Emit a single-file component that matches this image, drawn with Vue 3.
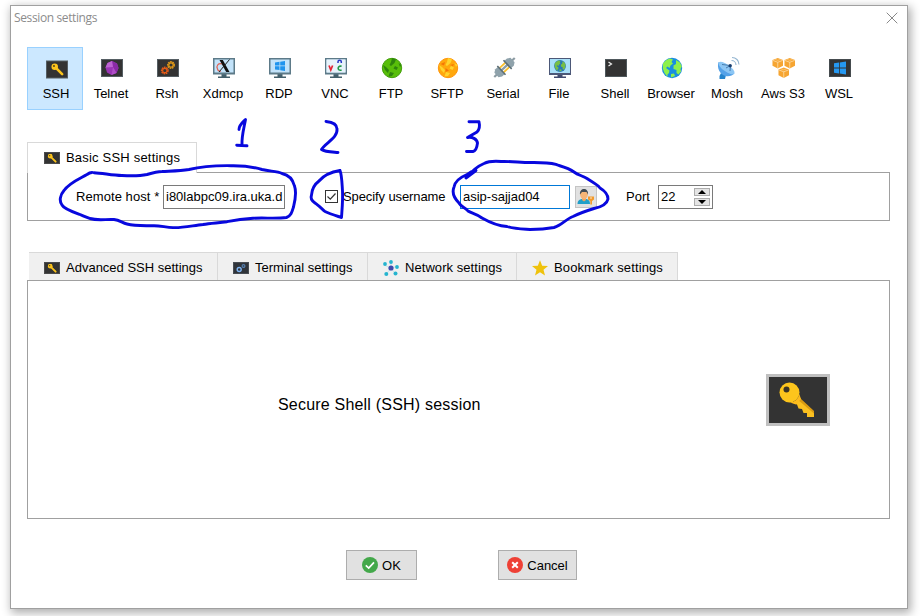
<script setup>
import { ref } from 'vue'

const sessions = ['SSH', 'Telnet', 'Rsh', 'Xdmcp', 'RDP', 'VNC', 'FTP', 'SFTP', 'Serial', 'File', 'Shell', 'Browser', 'Mosh', 'Aws S3', 'WSL']
const active = ref('SSH')
const iconId = (name) => '#i-' + name.toLowerCase().replace(' ', '')

const tabs = [
  { label: 'Advanced SSH settings', icon: '#i-key', cls: 'w-adv' },
  { label: 'Terminal settings', icon: '#i-term', cls: 'w-term' },
  { label: 'Network settings', icon: '#i-net', cls: 'w-net' },
  { label: 'Bookmark settings', icon: '#i-star', cls: 'w-book' },
]
const host = ref('i80labpc09.ira.uka.d')
const user = ref('asip-sajjad04')
const port = ref('22')
</script>

<template>
  <div class="desktop">
    <svg class="defs" width="0" height="0" aria-hidden="true">
      <defs>
        <symbol id="keyshape" viewBox="0 0 40 40">
          <path d="M21 18 L36 31.500 V37 H29 V33 H25.500 L24 29 L20.500 28.500 L19 24.500 L15 23 Z" fill="#fbc020" />
          <path d="M22 18 L36 31 V33.500 L19.500 19.500 Z" fill="#d99a12" />
          <circle cx="11.500" cy="12.500" r="10" fill="#fdc51c" />
          <path d="M12 22.500 A10 10 0 0 0 21.300 14 L23 19 L18 24.500 Z" fill="#fdbb1c" />
          <circle cx="8.500" cy="9.500" r="3" fill="#3a3426" />
        </symbol>
        <symbol id="keysmall" viewBox="0 0 14 14">
          <path d="M4.500 4.500 L12 12" stroke="#fbc41c" stroke-width="2.800" stroke-linecap="round" />
          <circle cx="4" cy="4" r="3.500" fill="#fdc51c" />
          <circle cx="3.200" cy="3.200" r="1" fill="#4a3c1c" />
        </symbol>
        <symbol id="i-ssh" viewBox="0 0 24 24">
          <rect x="1.500" y="4" width="21" height="17" fill="#333" stroke="#555e63" />
          <use href="#keysmall" x="6" y="6" width="13" height="13" />
        </symbol>
        <symbol id="i-key" viewBox="0 0 16 14">
          <rect x=".5" y="1.500" width="15" height="11" fill="#333" stroke="#4b4b4b" />
          <use href="#keysmall" x="3.500" y="2.500" width="9.500" height="9.500" />
        </symbol>
        <symbol id="i-telnet" viewBox="0 0 24 24">
          <rect x="1.500" y="3.500" width="21" height="17" fill="#333" stroke="#555e63" />
          <path d="M12 5 L17 7.500 L18.500 12 L16.500 17 L11.500 19 L7 16.500 L5.500 11.500 L7.500 7 Z" fill="#9a35b5" />
          <path d="M12 5 L13 11 L16.500 17 L18.500 12 L17 7.500 Z" fill="#8a2ba6" />
          <path d="M12 5 L13 11 L5.500 11.500 L7.500 7 Z" fill="#bd63d2" />
          <path d="M13 11 L16.500 17 L11.500 19 Z" fill="#b04dc8" />
        </symbol>
        <symbol id="i-rsh" viewBox="0 0 24 24">
          <rect x="1.500" y="3.500" width="21" height="17" fill="#333" stroke="#555e63" />
          <circle cx="15" cy="9" r="3.200" fill="none" stroke="#e39a17" stroke-width="1.500" stroke-dasharray="1.700 .6" />
          <circle cx="15" cy="9" r="2.200" fill="none" stroke="#e39a17" stroke-width="1.200" />
          <circle cx="8.800" cy="14.500" r="3.200" fill="none" stroke="#e55a17" stroke-width="1.500" stroke-dasharray="1.700 .6" />
          <circle cx="8.800" cy="14.500" r="2.200" fill="none" stroke="#e55a17" stroke-width="1.200" />
        </symbol>
        <symbol id="monitor" viewBox="0 0 24 24">
          <path d="M9.500 18 H14.500 V20.500 H18 V22 H6 V20.500 H9.500 Z" fill="#44606c" />
          <rect x="1" y="2" width="22" height="16.500" fill="#5d7a88" />
          <rect x="2.500" y="3.500" width="19" height="13" fill="#c3e3fa" />
        </symbol>
        <symbol id="i-xdmcp" viewBox="0 0 24 24">
          <use href="#monitor" width="24" height="24" />
          <path d="M10.500 8 C6 6.500 4 10 5.500 13 C6 15 8 15.500 9 15" fill="none" stroke="#df6355" stroke-width="1.200" />
          <path d="M7.500 4 H10.800 L17.500 16 H14.200 Z" fill="#111" />
          <path d="M17.500 3.500 L7 16" stroke="#222" stroke-width="1" />
        </symbol>
        <symbol id="i-rdp" viewBox="0 0 24 24">
          <use href="#monitor" width="24" height="24" />
          <path d="M7 6.500 L11.500 5.800 V9.600 H7 Z M12.200 5.700 L17 5 V9.600 H12.200 Z M7 10.300 H11.500 V14.100 L7 13.500 Z M12.200 10.300 H17 V15 L12.200 14.200 Z" fill="#2094ee" />
        </symbol>
        <symbol id="i-vnc" viewBox="0 0 24 24">
          <use href="#monitor" width="24" height="24" />
          <rect x="2.500" y="3.500" width="19" height="13" fill="#e7f3fb" />
          <path d="M5 9.500 L6.800 14 L8.600 9.500" fill="none" stroke="#e22535" stroke-width="1.700" />
          <path d="M14 7 V5.800 C14 3.800 17.300 3.800 17.300 5.800 V7" fill="none" stroke="#2636c8" stroke-width="1.500" />
          <path d="M17.600 10.300 C13 9 13 15.500 17.600 14" fill="none" stroke="#209747" stroke-width="1.600" />
        </symbol>
        <symbol id="lands" viewBox="0 0 24 24">
          <path d="M3 7.500 C5 4.500 8 3 10 2.500 L13 3.500 L11.500 6 L13 7.500 L10.500 9.500 L9.500 12 L7.500 10.500 L6 12 L9.500 14.500 L9 17 L7.500 18.500 L7.500 21 L4.500 17 L2.800 12.500 Z" />
          <path d="M16 4 L20 6.500 L21.800 10.500 L20.500 13 L21 15.500 L18.500 18.500 L16.500 17 L16.500 14 L13.500 13 L13.500 9.500 L16 8 Z" />
          <path d="M11 18 L14 17.500 L15 20 L11 21.500 Z" />
        </symbol>
        <symbol id="seas" viewBox="0 0 24 24">
          <path d="M12 2 L16 3.500 L14.500 7 L11 10 L9.500 9 L11 6 Z M3 9 L6 11 L9 14 L8 17 L5 14 Z M15 10 L18 11.500 L16.500 14 L13.500 12.500 Z M10 16 L14 17 L12 20 L8.500 20.500 Z M18.500 7 L21.500 9 L20 11 Z" />
        </symbol>
        <symbol id="i-ftp" viewBox="0 0 24 24">
          <circle cx="12" cy="12" r="9.700" fill="#58be0a" stroke="#439e0b" />
          <use href="#seas" width="24" height="24" fill="#2e850c" />
        </symbol>
        <symbol id="i-sftp" viewBox="0 0 24 24">
          <circle cx="12" cy="12" r="9.700" fill="#ffa80d" stroke="#ff950b" />
          <use href="#seas" width="24" height="24" fill="#ffd42e" />
          <path d="M4.500 8 L9 6 L8 9.500 Z M14 9 L18 8 L17 10 Z M9.500 12 L13 14.500 L9.500 16 Z" fill="#f57607" />
        </symbol>
        <symbol id="i-browser" viewBox="0 0 24 24">
          <circle cx="12" cy="12" r="10.200" fill="#198ee0" />
          <use href="#lands" width="24" height="24" fill="#8df04c" />
        </symbol>
        <symbol id="i-serial" viewBox="0 0 24 24">
          <g transform="translate(12.500 11.500) rotate(-43)">
            <path d="M-14 0 H14" stroke="#8c9ba2" stroke-width="2.200" />
            <path d="M-4 -3 H4 M-4 3 H4" stroke="#fbbf2a" stroke-width="1.800" />
            <path d="M-4.500 -5 V5 H-8 L-11 3 V-3 L-8 -5 Z" fill="#8fa2ab" />
            <path d="M4.500 -5 V5 H8 L11 3 V-3 L8 -5 Z" fill="#8fa2ab" />
            <path d="M-4.200 -6 V6 M4.200 -6 V6" stroke="#5c6e77" stroke-width="1.600" />
          </g>
        </symbol>
        <symbol id="i-file" viewBox="0 0 24 24">
          <path d="M9.500 18 H14.500 V20.500 H18 V22 H6 V20.500 H9.500 Z" fill="#414b70" />
          <rect x="1" y="2" width="22" height="17" fill="#4c5878" />
          <rect x="2" y="3" width="20" height="14" fill="#a9e0f8" />
          <circle cx="12" cy="10" r="5.900" fill="#2878b8" />
          <use href="#lands" x="5" y="3" width="14" height="14" fill="#77bf45" />
        </symbol>
        <symbol id="i-shell" viewBox="0 0 24 24">
          <rect x="1.500" y="3.500" width="21" height="17" fill="#333" stroke="#4f585c" />
          <path d="M4.500 6 L7.500 8 L4.500 10" fill="none" stroke="#eee" stroke-width="1.200" />
        </symbol>
        <symbol id="i-mosh" viewBox="0 0 24 24">
          <path d="M5 17 L10 19 L9 23 H3.500 V20 Z" fill="#2584cc" />
          <path d="M2.500 6 C.5 12 4 18.500 9.500 20 C13 21 16.500 19.500 18.500 17.500 Z" fill="#55a2e8" />
          <ellipse cx="10.500" cy="12" rx="9.500" ry="3.500" transform="rotate(35 10.500 12)" fill="#8cc6f4" />
          <path d="M10 12 L14.500 9.500 M6 8.500 L14.500 9.500 L14 15" stroke="#37699b" fill="none" stroke-width=".8" />
          <circle cx="14.200" cy="9.700" r="1.700" fill="#173e70" />
          <path d="M15.500 4.500 C18 4.500 20 6.500 20 9 M16 1.500 C20 1.500 23 4.500 23 8.500" fill="none" stroke="#94b6d1" stroke-width="1.100" />
        </symbol>
        <symbol id="cube" viewBox="0 0 12 12">
          <path d="M6 .5 L11.500 2.500 V8.500 L6 11.500 L.5 8.500 V2.500 Z" fill="#f6a532" />
          <path d="M.8 3 L6 5 L11.200 3 M6 5 V11.500" fill="none" stroke="#ffe9c0" stroke-width=".7" />
          <path d="M3.200 2 L6 3 L9 2" fill="none" stroke="#fbd391" stroke-width=".6" />
        </symbol>
        <symbol id="i-awss3" viewBox="0 0 24 24">
          <use href="#cube" x="0" y="1.500" width="11.500" height="11.500" />
          <use href="#cube" x="12" y="1.500" width="11.500" height="11.500" />
          <use href="#cube" x="6" y="11" width="11.500" height="11.500" />
        </symbol>
        <symbol id="i-wsl" viewBox="0 0 24 24">
          <rect x="1.500" y="3.500" width="21" height="17" fill="#333" stroke="#454b4e" />
          <path d="M6 7.300 L11 6.500 V11.600 H6 Z M11.800 6.400 L18 5.500 V11.600 H11.800 Z M6 12.400 H11 V17.500 L6 16.700 Z M11.800 12.400 H18 V18.500 L11.800 17.600 Z" fill="#2598f1" />
        </symbol>
        <symbol id="i-term" viewBox="0 0 16 14">
          <rect x=".5" y="1.500" width="15" height="11" fill="#30343a" stroke="#484d53" />
          <circle cx="6.200" cy="8.500" r="2" fill="none" stroke="#7eb4f3" stroke-width="1.400" />
          <circle cx="10.500" cy="5" r="1.400" fill="none" stroke="#567fae" stroke-width="1.200" />
        </symbol>
        <symbol id="i-net" viewBox="0 0 16 16">
          <path d="M8 8 V2 M8 8 L2 5.500 M8 8 L14 6.500 M8 8 L3.500 14 M8 8 L12.500 14" stroke="#b9dce6" stroke-width=".7" />
          <circle cx="8" cy="8" r="2.600" fill="#4048ad" />
          <g fill="#25b4cf"><circle cx="8" cy="2" r="1.900" /><circle cx="2" cy="4" r="1.900" /><circle cx="14" cy="7" r="1.900" /><circle cx="3.300" cy="14" r="2" /><circle cx="12.500" cy="13.500" r="2" /></g>
        </symbol>
        <symbol id="i-star" viewBox="0 0 16 16">
          <path d="M8 .3 L10.200 5.700 L16 6 L11.500 9.700 L13 15.400 L8 12.200 L3 15.400 L4.500 9.700 L0 6 L5.800 5.700 Z" fill="#efc20c" />
        </symbol>
      </defs>
    </svg>

    <main class="window">
      <header class="titlebar">
        <span>Session settings</span>
        <svg width="12" height="12" viewBox="0 0 12 12"><path d="M.7 .7 L11.300 11.300 M11.300 .7 L.7 11.300" stroke="#888" stroke-width="1" /></svg>
      </header>

      <nav class="toolbar">
        <div v-for="s in sessions" :key="s" class="session" :class="{ active: s === active }" @click="active = s">
          <svg width="24" height="24"><use :href="iconId(s)" /></svg>
          <span>{{ s }}</span>
        </div>
      </nav>

      <section class="basic">
        <div class="basic-tab">
          <svg width="16" height="14"><use href="#i-key" /></svg>
          <span>Basic SSH settings</span>
        </div>
        <div class="basic-panel">
          <label class="l-host">Remote host *</label>
          <div class="field f-host">{{ host }}</div>
          <div class="check"><svg width="11" height="11" viewBox="0 0 11 11"><path d="M1.500 5.500 L4.300 8.200 L9.500 2.500" fill="none" stroke="#333" stroke-width="1.200" /></svg></div>
          <label class="l-user">Specify username</label>
          <div class="field f-user">{{ user }}</div>
          <button class="userbtn">
            <svg width="20" height="20" viewBox="0 0 20 20">
              <path d="M1.500 17 C1.500 13 4 12 8 11.500 C12 12 14 13 14 17 Z" fill="#219fc9" />
              <path d="M6 10 H10 V13 L8 14.500 L6 13 Z" fill="#eea65f" />
              <ellipse cx="8" cy="7.500" rx="3.900" ry="4.700" fill="#f5b576" />
              <path d="M4 7.500 C3 0 13 0 12 7.500 L10.500 5 H6 Z" fill="#424d55" />
              <path d="M12 9.500 H18 V12.500 L16 14 V17.500 H14.300 V14 L12 12.500 Z" fill="#f39a2b" />
              <circle cx="15" cy="11" r=".8" fill="#fff0d8" />
            </svg>
          </button>
          <label class="l-port">Port</label>
          <div class="field f-port">
            <span>{{ port }}</span>
            <div class="spin">
              <i><svg width="8" height="4" viewBox="0 0 8 4"><path d="M0 4 L4 0 L8 4 Z" fill="#000" /></svg></i>
              <i><svg width="8" height="4" viewBox="0 0 8 4"><path d="M0 0 L4 4 L8 0 Z" fill="#000" /></svg></i>
            </div>
          </div>
        </div>
      </section>

      <section class="advanced">
        <div class="tabs">
          <div v-for="t in tabs" :key="t.label" class="tab" :class="t.cls">
            <svg width="16" height="16"><use :href="t.icon" /></svg>
            <span>{{ t.label }}</span>
          </div>
        </div>
        <div class="adv-panel">
          <p>Secure Shell (SSH) session</p>
          <div class="bigkey"><svg width="40" height="40"><use href="#keyshape" /></svg></div>
        </div>
      </section>

      <footer class="actions">
        <button class="btn ok">
          <svg width="16" height="16" viewBox="0 0 16 16"><circle cx="8" cy="8" r="8" fill="#43a84a" /><path d="M3.800 8.300 L6.700 11 L12 5.300" fill="none" stroke="#fff" stroke-width="1.700" /></svg>
          <span>OK</span>
        </button>
        <button class="btn cancel">
          <svg width="16" height="16" viewBox="0 0 16 16"><circle cx="8" cy="8" r="8" fill="#ee4035" /><path d="M5.200 5.200 L10.800 10.800 M10.800 5.200 L5.200 10.800" stroke="#fff" stroke-width="2" /></svg>
          <span>Cancel</span>
        </button>
      </footer>
    </main>

    <svg class="ink" width="920" height="616" viewBox="0 0 920 616">
      <g fill="none" stroke="#0808de" stroke-width="2.900" stroke-linecap="round" stroke-linejoin="round">
        <path d="M94 172.700 C103 173 112 175.500 122 175.500 C131 176 140 176 147 174.500 C152 173 157 171.500 162 171.500 C171 171 180 171 189 169.500 C201 166.500 216 165.500 231 165.700 C243 165.500 254 167 262 169.500 C270 171.500 277 171 282 173.500 C289 175 293 180 294.500 186 C297 193 295 201 293.500 207 C292 212 291 216 286.500 217.500 C276 219 264 217.500 253 218.300 C243 219 236 220 227 221.700 C219 223 211 223 203 224.500 C193 225.500 183 228 173 227.600 C166 227.500 160 225.500 153 225.800 C144 225.500 135 226 127 224 C122 223 120 220 114 219.500 C106 219 98 221 90 218.500 C86 217 83 216 80 214.500 C73 212 64 209 62 205 C59 201 60 195 64 190.500 C69 183 79 179 87 174.500 C89 173 90 172.500 92 172.500" />
        <path d="M239 129.500 C239 125 243 122 245.500 119.500 C244 128 241.500 136 242 145 M236.700 145.200 L247 145.800" />
        <path d="M326 121.500 C331 122 337 123 337 129 C338 138 325 143 321.500 149.500 C325 152 332 152 338 152.500" />
        <path d="M469 121.800 H479 C480 126 479 130 477 132 L467.500 137.500 C472 136.500 477 139 477.500 143 C477 147 476 151 473 151.500 H466.500" />
        <path d="M340 170.500 C342 176 342 184 342.500 191 C343 200 342 210 341.500 217.500 C337 216 330 214 325 211.500 C321 208 318 205 315 203 C312 201 310 199 311.500 195 C312 188 315 184 319 181 C324 175 331 172 340 170.500" />
        <path d="M466 178 C471 172 478 166 484 163.500 C489 161 495 161 501 161.500 C512 161 523 163 534 162.500 C543 163 552 162 559 165.500 C564 167 570 169 574 172 C578 175 583 176 587 178.500 C592 182 597 184 600 188 C605 191 608 195 608 199 C607 204 601 207 594 208.500 C586 211 578 214 573 216.500 C566 219 562 225 554 227.500 C546 229 538 229.500 530 229.500 C521 229 514 229 507 226.500 C498 226 489 222 482 218 C477 214 471 213 468 211 C465 207 461 207 459 203 C454 198 452 192 454 187 C455 181 461 177 467 174.500 C470 172 473 171 476 170.500 L466 178" />
      </g>
    </svg>
  </div>
</template>

<style>
body { margin: 0; background: #fff; overflow: hidden; }
</style>

<style scoped>
* { box-sizing: border-box; }
.desktop { width: 920px; height: 616px; padding: 5px 12px 7px 10px; position: relative; overflow: hidden; background: #fff; font: 13px/16px "Liberation Sans", Arial, sans-serif; color: #000; }
.defs { position: absolute; }
svg { display: block; flex: none; }
.window { width: 898px; height: 604px; border: 1px solid #a0a0a0; background: #fff; box-shadow: 2px 3px 9px 1px rgba(0, 0, 0, .32); }
.titlebar { height: 41px; padding: 4px 9px 0 3px; display: flex; justify-content: space-between; font: 12px/16px "Open Sans", "Noto Sans", sans-serif; letter-spacing: -.38px; color: #8c8c8c; }
.titlebar svg { margin-top: 2px; }
.toolbar { display: flex; padding-left: 16px; height: 63px; }
.session { width: 56px; height: 63px; padding-top: 9px; display: flex; flex-direction: column; align-items: center; white-space: nowrap; }
.session svg { margin-left: 2px; }
.session span { margin-top: 6px; }
.session.active { background: #cce8ff; border: 1px solid #99d1ff; padding-left: 2px; }
.session.active span { margin-top: 5px; }
.basic { margin: 32px 0 0 16px; width: 863px; }
.basic-tab { width: 170px; height: 31px; padding-left: 16px; display: flex; align-items: center; gap: 6px; border: 1px solid #d9d9d9; border-bottom: 0; background: #fff; position: relative; margin-bottom: -1px; letter-spacing: .2px; }
.basic-panel { height: 49px; border: 1px solid #a0a0a0; display: flex; align-items: center; white-space: nowrap; }
.l-host { margin-left: 48px; width: 87px; letter-spacing: .07px; }
.field { height: 24px; border: 1px solid #7a7a7a; padding-left: 2px; display: flex; align-items: center; overflow: hidden; background: #fff; }
.f-host { width: 122px; }
.check { width: 13px; height: 13px; border: 1px solid #333; margin-left: 40px; }
.l-user { margin-left: 5px; width: 117px; letter-spacing: -.1px; }
.f-user { width: 110px; border-color: #0078d7; }
.userbtn { width: 22px; height: 22px; margin-left: 5px; padding: 0; border: 1px solid #c4c4c4; background: #e1e1e1; }
.l-port { margin-left: 29px; width: 32px; }
.f-port { width: 55px; justify-content: space-between; padding-right: 2px; }
.spin { display: flex; flex-direction: column; gap: 2px; }
.spin i { width: 16px; height: 8px; background: #e4e4e4; border: 1px solid #adadad; display: flex; align-items: center; justify-content: center; }
.advanced { margin: 31px 0 0 16px; width: 863px; }
.tabs { display: flex; padding-left: 2px; height: 28px; }
.tab { height: 28px; border: 1px solid #d9d9d9; border-width: 1px 1px 0 0; background: #f0f0f0; display: flex; align-items: center; gap: 6px; padding: 2px 0 0 15px; white-space: nowrap; }
.w-adv { width: 189px; }
.w-term { width: 150px; }
.w-net { width: 149px; letter-spacing: .06px; }
.w-book { width: 161px; letter-spacing: .12px; }
.adv-panel { height: 239px; border: 1px solid #a0a0a0; display: flex; align-items: center; justify-content: space-between; padding: 0 59px 0 250px; }
.adv-panel p { margin: 10px 0 0; font-size: 16px; line-height: 20px; letter-spacing: .2px; }
.bigkey { width: 64px; height: 52px; border: 3px solid #c0c0c0; background: #333; display: flex; align-items: center; justify-content: center; }
.actions { display: flex; padding: 31px 0 0 335px; gap: 81px; }
.btn { height: 30px; border: 1px solid #adadad; background: #e1e1e1; padding: 0; display: flex; align-items: center; justify-content: center; gap: 4px; font: inherit; color: #000; }
.btn span { margin-top: 1px; }
.ok { width: 71px; }
.cancel { width: 79px; }
.ink { position: absolute; left: 0; top: 0; pointer-events: none; }
</style>
